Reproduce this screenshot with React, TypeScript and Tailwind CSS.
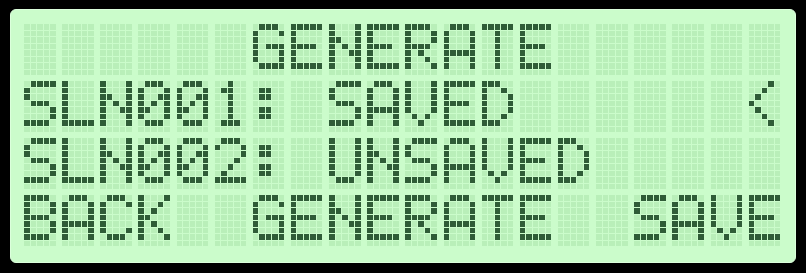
import React from 'react';

// 5x7 HD44780-style glyphs, row 8 is the cursor line (always off)
const FONT: Record<string, string[]> = {
  ' ': ['.....', '.....', '.....', '.....', '.....', '.....', '.....'],
  A: ['.###.', '#...#', '#...#', '#...#', '#####', '#...#', '#...#'],
  B: ['####.', '#...#', '#...#', '####.', '#...#', '#...#', '####.'],
  C: ['.###.', '#...#', '#....', '#....', '#....', '#...#', '.###.'],
  D: ['###..', '#..#.', '#...#', '#...#', '#...#', '#..#.', '###..'],
  E: ['#####', '#....', '#....', '####.', '#....', '#....', '#####'],
  G: ['.###.', '#...#', '#....', '#.###', '#...#', '#...#', '.####'],
  K: ['#...#', '#..#.', '#.#..', '##...', '#.#..', '#..#.', '#...#'],
  L: ['#....', '#....', '#....', '#....', '#....', '#....', '#####'],
  N: ['#...#', '#...#', '##..#', '#.#.#', '#..##', '#...#', '#...#'],
  R: ['####.', '#...#', '#...#', '####.', '#.#..', '#..#.', '#...#'],
  S: ['.####', '#....', '#....', '.###.', '....#', '....#', '####.'],
  T: ['#####', '..#..', '..#..', '..#..', '..#..', '..#..', '..#..'],
  U: ['#...#', '#...#', '#...#', '#...#', '#...#', '#...#', '.###.'],
  V: ['#...#', '#...#', '#...#', '#...#', '#...#', '.#.#.', '..#..'],
  '0': ['.###.', '#...#', '#..##', '#.#.#', '##..#', '#...#', '.###.'],
  '1': ['..#..', '.##..', '..#..', '..#..', '..#..', '..#..', '.###.'],
  '2': ['.###.', '#...#', '....#', '...#.', '..#..', '.#...', '#####'],
  ':': ['.....', '.##..', '.##..', '.....', '.##..', '.##..', '.....'],
  '<': ['...#.', '..#..', '.#...', '#....', '.#...', '..#..', '...#.'],
};

const LINES = [
  '      GENERATE      ',
  'SLN001: SAVED      <',
  'SLN002: UNSAVED     ',
  'BACK  GENERATE  SAVE',
];

const Cell = ({ ch }: { ch: string }) => {
  const rows = [...(FONT[ch] ?? FONT[' ']), '.....'];
  return (
    <div className="grid grid-cols-[repeat(5,5.5px)] grid-rows-[repeat(8,5.5px)] gap-[1px]">
      {rows.flatMap((r, y) =>
        r.split('').map((d, x) => (
          <div key={`${y}-${x}`} className={d === '#' ? 'bg-[#2f5c37]' : 'bg-[#b9efb9]'} />
        ))
      )}
    </div>
  );
};

export default function App() {
  return (
    <div className="w-[806px] h-[273px] bg-black pt-[9px] pl-[10px]">
      <div className="w-[786px] h-[254px] rounded-[6px] bg-[#cbfccb] border border-[#dcffdc] pl-[13px] pt-[14px]">
        <div className="flex flex-col gap-[6.1px]">
          {LINES.map((line, i) => (
            <div key={i} className="flex gap-[6.65px]">
              {line.split('').map((ch, j) => (
                <Cell key={j} ch={ch} />
              ))}
            </div>
          ))}
        </div>
      </div>
    </div>
  );
}
